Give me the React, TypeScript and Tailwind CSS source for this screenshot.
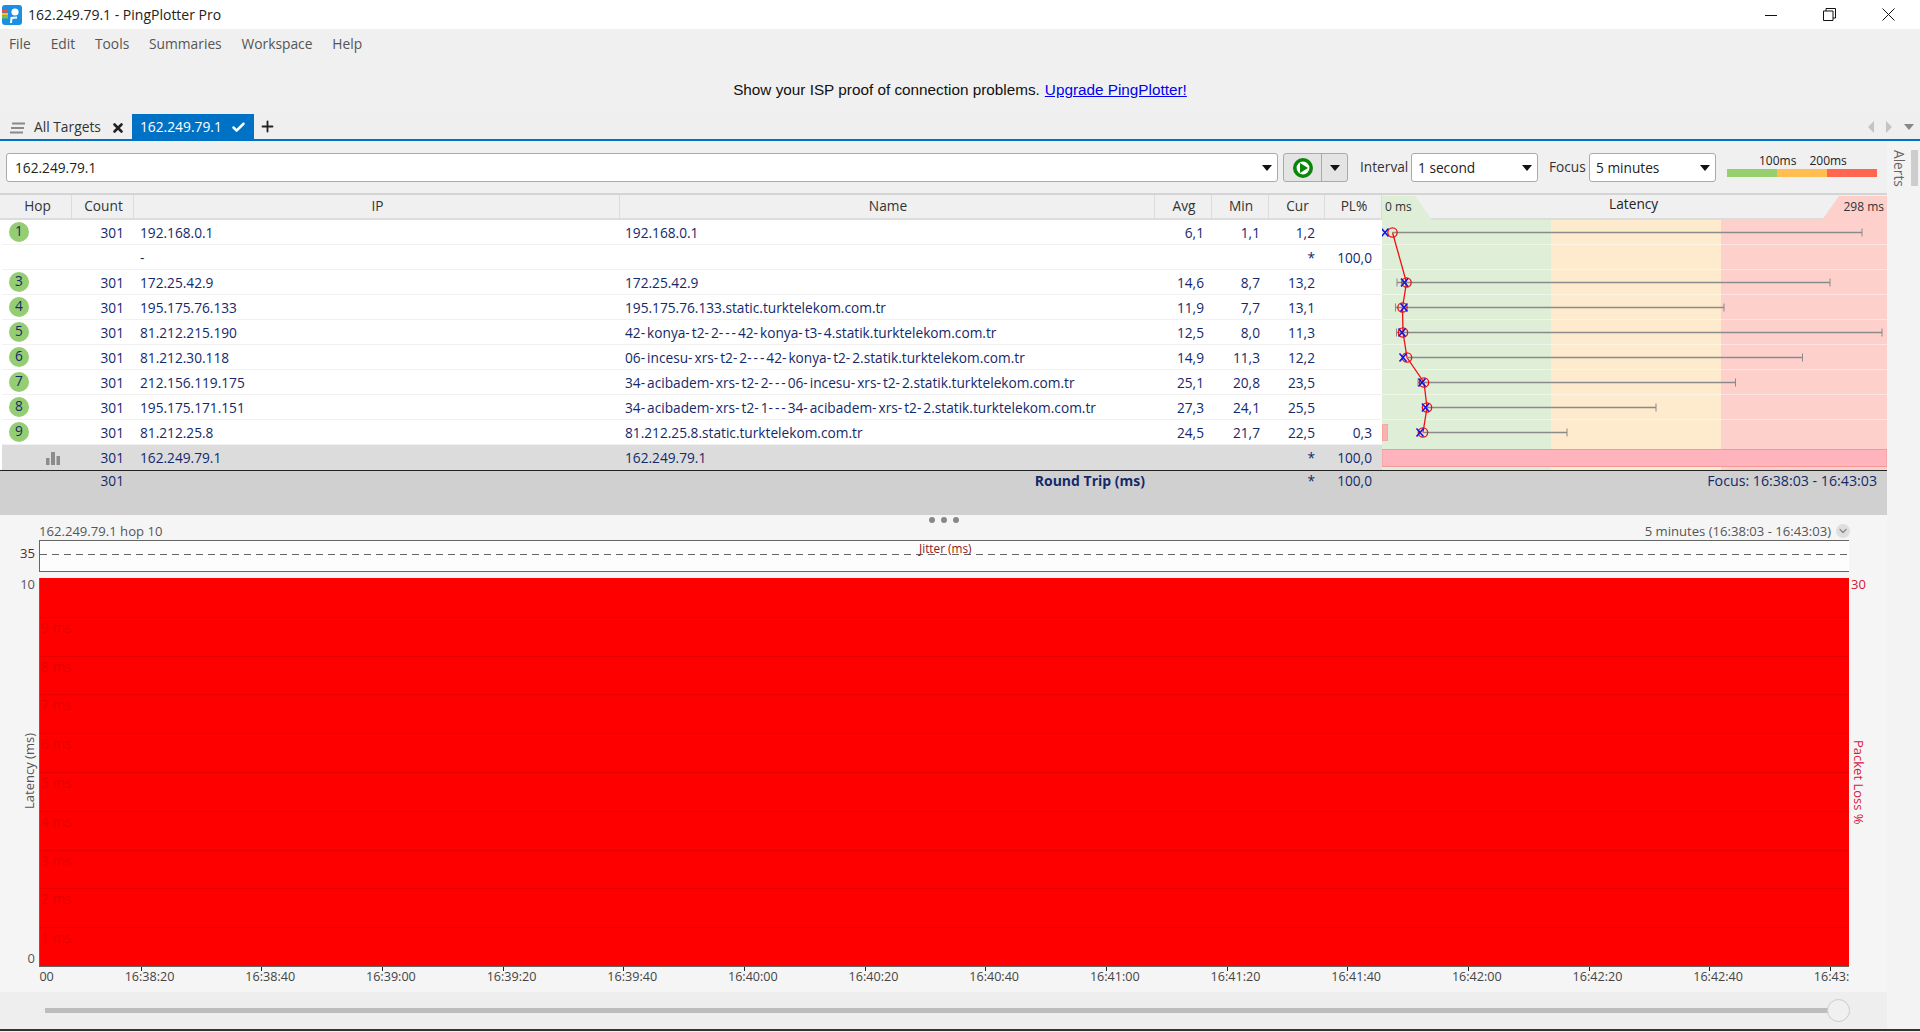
import { Check, ChevronDown, Plus, X } from 'lucide-react';

const COLS = 'grid grid-cols-[70px_62px_486px_535px_57px_57px_56px_57px]';

const hops = [
  { hop: '1', count: '301', ip: '192.168.0.1', name: '192.168.0.1', avg: '6,1', min: '1,1', cur: '1,2', pl: '' },
  { hop: '', count: '', ip: '-', name: '', avg: '', min: '', cur: '*', pl: '100,0' },
  { hop: '3', count: '301', ip: '172.25.42.9', name: '172.25.42.9', avg: '14,6', min: '8,7', cur: '13,2', pl: '' },
  { hop: '4', count: '301', ip: '195.175.76.133', name: '195.175.76.133.static.turktelekom.com.tr', avg: '11,9', min: '7,7', cur: '13,1', pl: '' },
  { hop: '5', count: '301', ip: '81.212.215.190', name: '42-konya-t2-2---42-konya-t3-4.statik.turktelekom.com.tr', avg: '12,5', min: '8,0', cur: '11,3', pl: '' },
  { hop: '6', count: '301', ip: '81.212.30.118', name: '06-incesu-xrs-t2-2---42-konya-t2-2.statik.turktelekom.com.tr', avg: '14,9', min: '11,3', cur: '12,2', pl: '' },
  { hop: '7', count: '301', ip: '212.156.119.175', name: '34-acibadem-xrs-t2-2---06-incesu-xrs-t2-2.statik.turktelekom.com.tr', avg: '25,1', min: '20,8', cur: '23,5', pl: '' },
  { hop: '8', count: '301', ip: '195.175.171.151', name: '34-acibadem-xrs-t2-1---34-acibadem-xrs-t2-2.statik.turktelekom.com.tr', avg: '27,3', min: '24,1', cur: '25,5', pl: '' },
  { hop: '9', count: '301', ip: '81.212.25.8', name: '81.212.25.8.static.turktelekom.com.tr', avg: '24,5', min: '21,7', cur: '22,5', pl: '0,3' },
];

// x values are relative to the left edge of the latency graph
const points = [
  { y: 12.5, c: 10.5, x: 3, left: null, right: 480 },
  { y: 62.5, c: 24.5, x: 22.5, left: 15, right: 448 },
  { y: 87.5, c: 20.5, x: 22, left: 13.5, right: 342 },
  { y: 112.5, c: 21, x: 20, left: 14.5, right: 500 },
  { y: 137.5, c: 25, x: 21, left: null, right: 420.5 },
  { y: 162.5, c: 42, x: 40, left: 36, right: 353.5 },
  { y: 187.5, c: 45, x: 43.5, left: null, right: 274 },
  { y: 212.5, c: 41, x: 38, left: null, right: 185 },
];

const times = [
  '16:38:00', '16:38:20', '16:38:40', '16:39:00', '16:39:20', '16:39:40', '16:40:00', '16:40:20', '16:40:40',
  '16:41:00', '16:41:20', '16:41:40', '16:42:00', '16:42:20', '16:42:40', '16:43:00',
];

function AppIcon() {
  return (
    <svg width="20" height="20" viewBox="0 0 20 20" className="ml-[2px] shrink-0">
      <rect width="20" height="20" rx="3" fill="#1b8fe2" />
      <rect x="0" y="5" width="6" height="2.5" fill="#e8503a" />
      <rect x="0" y="8" width="6" height="2.5" fill="#f5c033" />
      <rect x="0" y="11" width="6" height="2.5" fill="#7cc04b" />
      <circle cx="13" cy="7" r="3.6" fill="#fff" />
      <path d="M9 18 L9.5 13 L15 12.5" stroke="#fff" strokeWidth="2" fill="none" />
    </svg>
  );
}

function TitleBar() {
  return (
    <div className="flex h-[29px] items-center bg-white">
      <AppIcon />
      <span className="ml-[6px] text-[14px] text-[#222]">162.249.79.1 - PingPlotter Pro</span>
      <div className="ml-auto flex items-center">
        <svg width="12" height="12" viewBox="0 0 12 12" className="mr-[46px]">
          <path d="M0 6.5 H12" stroke="#111" strokeWidth="1" />
        </svg>
        <svg width="13" height="13" viewBox="0 0 13 13" className="mr-[46px]">
          <path d="M0.5 3 H10 V12.5 H0.5 Z M3 3 V0.5 H12.5 V10 H10" stroke="#111" strokeWidth="1" fill="none" />
        </svg>
        <svg width="13" height="13" viewBox="0 0 13 13" className="mr-[25px]">
          <path d="M0.5 0.5 L12.5 12.5 M12.5 0.5 L0.5 12.5" stroke="#111" strokeWidth="1" fill="none" />
        </svg>
      </div>
    </div>
  );
}

function MenuBar() {
  return (
    <div className="flex h-[29px] items-center gap-[19.8px] bg-[#f0f0f0] pl-[9px] pt-[1px] text-[13.8px] text-[#555]">
      <span>File</span>
      <span>Edit</span>
      <span>Tools</span>
      <span>Summaries</span>
      <span>Workspace</span>
      <span>Help</span>
    </div>
  );
}

function TabBar() {
  return (
    <div className="flex h-[28px] items-end border-b-2 border-[#0072c6] bg-[#efefef]">
      <div className="flex h-[26px] items-center pl-[10px] pt-[3px] text-[#333]">
        <svg width="15" height="12" viewBox="0 0 15 12">
          <path d="M2 1.5 H15 M1 6 H14 M0 10.5 H13" stroke="#8a8a8a" strokeWidth="2" />
        </svg>
        <span className="ml-[9px] text-[13.8px]">All Targets</span>
        <X size={14} strokeWidth={4.5} className="ml-[10px] text-[#222]" />
      </div>
      <div className="ml-[7px] flex h-[25px] w-[122px] items-center bg-[#0072c6] pl-[8px] pt-[2px] text-[13.8px] text-white">
        <span>162.249.79.1</span>
        <Check size={15} strokeWidth={4} className="ml-[9px]" />
      </div>
      <Plus size={17} strokeWidth={2.6} className="mb-[4px] ml-[5px] text-[#222]" />
      <div className="mb-[6px] ml-auto mr-[6px] flex items-center gap-[12px]">
        <span className="h-0 w-0 border-y-[6px] border-r-[6px] border-y-transparent border-r-[#c4c4c4]" />
        <span className="h-0 w-0 border-y-[6px] border-l-[6px] border-y-transparent border-l-[#c4c4c4]" />
        <span className="h-0 w-0 border-x-[5px] border-t-[6px] border-x-transparent border-t-[#888]" />
      </div>
    </div>
  );
}

function Caret() {
  return <span className="h-0 w-0 border-x-[5px] border-t-[6px] border-x-transparent border-t-[#111]" />;
}

function Select({ label }: { label: string }) {
  return (
    <div className="flex h-[29px] w-[127px] items-center justify-between rounded-[3px] border border-[#aaa] bg-white pl-[6px] pr-[5px] text-[13.7px] text-[#222]">
      <span className="mt-[2px]">{label}</span>
      <Caret />
    </div>
  );
}

function Toolbar() {
  return (
    <div className="flex h-[52px] items-start bg-[#f0f0f0] pl-[6px] pt-[12px]">
      <div className="flex h-[29px] w-[1272px] items-center justify-between rounded-[3px] border border-[#aaa] bg-white pl-[8px] pr-[5px] text-[13.7px] text-[#222]">
        <span className="mt-[1px]">162.249.79.1</span>
        <Caret />
      </div>
      <div className="ml-[5px] flex h-[29px] w-[65px] rounded-[3px] border border-[#aaa] bg-[#e4e4e4]">
        <div className="flex w-[38px] items-center justify-center border-r border-[#aaa]">
          <svg width="20" height="20" viewBox="0 0 20 20">
            <circle cx="10" cy="10" r="8.2" fill="#fff" stroke="#0a860a" strokeWidth="3.6" />
            <path d="M7 5 L15 10 L7 15 Z" fill="#0a860a" />
          </svg>
        </div>
        <div className="flex flex-1 items-center justify-center">
          <Caret />
        </div>
      </div>
      <span className="ml-[12px] mt-[4px] w-[51px] text-[13.7px] text-[#333]">Interval</span>
      <Select label="1 second" />
      <span className="ml-[11px] mt-[4px] w-[40px] text-[13.7px] text-[#333]">Focus</span>
      <Select label="5 minutes" />
      <div className="ml-[11px] w-[150px]">
        <div className="flex h-[16px] items-center pl-[32px] text-[12px] leading-none text-[#222]">
          <span>100ms</span>
          <span className="ml-[13px]">200ms</span>
        </div>
        <div className="flex h-[8px]">
          <span className="w-[50px] bg-[#97ce6e]" />
          <span className="w-[50px] bg-[#ffbe4f]" />
          <span className="w-[50px] bg-[#ff6650]" />
        </div>
      </div>
    </div>
  );
}

function TableHeader() {
  const cell = 'flex items-center justify-center border-r border-[#dcdcdc] pl-[2px]';
  return (
    <div className="flex h-[27px] border-y-[2px] border-t-[#d4d4d4] border-b-[#dcdcdc] bg-[#f0f0f0] pl-[2px] text-[13.7px] text-[#333]">
      <div className={COLS}>
        <div className={cell}>Hop</div>
        <div className={cell}>Count</div>
        <div className={cell}>IP</div>
        <div className={cell}>Name</div>
        <div className={cell}>Avg</div>
        <div className={cell}>Min</div>
        <div className={cell}>Cur</div>
        <div className={cell}>PL%</div>
      </div>
      <div className="relative flex w-[505px] justify-between">
        <svg width="505" height="24" viewBox="0 0 505 24" className="absolute left-0 top-[1px]">
          <path d="M0 0 H33 L50 24 H0 Z" fill="#dfeed7" />
          <path d="M457 0 H505 V24 H440 Z" fill="#fed0cc" />
        </svg>
        <span className="relative ml-[3px] mt-[3px] text-[12px] text-[#333]">0 ms</span>
        <span className="relative -mt-[1px] ml-[12px] text-[#222]">Latency</span>
        <span className="relative mr-[3px] mt-[3px] text-[12px] text-[#333]">298 ms</span>
      </div>
    </div>
  );
}

// the hyphens in the host names run wider in the original UI font
function HostName({ name }: { name: string }) {
  const parts = name.split('-');
  return (
    <>
      {parts.map((part, i) => (
        <span key={i}>
          {i > 0 && <span className="tracking-[2px]">-</span>}
          {part}
        </span>
      ))}
    </>
  );
}

function HopRow({ row }: { row: (typeof hops)[number] }) {
  return (
    <div className={`${COLS} h-[25px] border-b border-[#f1f1f1] text-[13.7px] text-[#14296b]`}>
      <div className="pl-[7px] pt-[2px]">
        {row.hop && (
          <span className="flex h-[20px] w-[20px] items-start justify-center rounded-full bg-[#95cd72] text-[13.7px] leading-[18px]">
            {row.hop}
          </span>
        )}
      </div>
      <div className="pr-[10px] text-right leading-[26px]">{row.count}</div>
      <div className="pl-[6px] leading-[26px]">{row.ip}</div>
      <div className="pl-[5px] leading-[26px]">
        <HostName name={row.name} />
      </div>
      <div className="pr-[8px] text-right leading-[26px]">{row.avg}</div>
      <div className="pr-[9px] text-right leading-[26px]">{row.min}</div>
      <div className="pr-[10px] text-right leading-[26px]">{row.cur}</div>
      <div className="pr-[10px] text-right leading-[26px]">{row.pl}</div>
    </div>
  );
}

function LatencyGraph() {
  return (
    <svg width="505" height="250" viewBox="0 0 505 250" className="shrink-0">
      <rect x="0" y="0" width="169" height="250" fill="#dfeed7" />
      <rect x="169" y="0" width="170" height="250" fill="#feeacd" />
      <rect x="339" y="0" width="166" height="250" fill="#fed0cc" />
      {[25, 50, 75, 100, 125, 150, 175, 200].map((y) => (
        <line key={y} x1="0" x2="505" y1={y - 0.5} y2={y - 0.5} stroke="#fff" strokeOpacity="0.45" />
      ))}
      <rect x="0.5" y="204.5" width="5" height="16" fill="#f9b3b3" stroke="#f4a9a0" />
      <rect x="0" y="229.5" width="505" height="17" fill="#ffb3bd" stroke="#ef9a98" />
      <polyline points={points.map((p) => `${p.c},${p.y}`).join(' ')} fill="none" stroke="#f01010" strokeWidth="1.3" />
      {points.map((p) => (
        <g key={p.y}>
          <line x1={p.left ?? p.c} x2={p.right} y1={p.y} y2={p.y} stroke="#8a8a8a" strokeWidth="1.3" />
          {p.left !== null && <line x1={p.left} x2={p.left} y1={p.y - 4} y2={p.y + 4} stroke="#8a8a8a" />}
          <line x1={p.right} x2={p.right} y1={p.y - 4} y2={p.y + 4} stroke="#8a8a8a" />
          <circle cx={p.c} cy={p.y} r="4.7" fill="none" stroke="#f01010" strokeWidth="1.3" />
          <path
            d={`M${p.x - 3.5} ${p.y - 4} L${p.x + 3.5} ${p.y + 4} M${p.x + 3.5} ${p.y - 4} L${p.x - 3.5} ${p.y + 4}`}
            stroke="#1515e8"
            strokeWidth="1.6"
          />
        </g>
      ))}
    </svg>
  );
}

function TableBody() {
  return (
    <div className="flex bg-white pl-[2px]">
      <div className="w-[1380px]">
        {hops.map((row) => (
          <HopRow key={row.ip} row={row} />
        ))}
        <div className={`${COLS} h-[25px] bg-[#dcdcdc] text-[13.7px] leading-[26px] text-[#14296b]`}>
          <div className="flex items-center justify-end pr-[12px]">
            <svg width="14" height="13" viewBox="0 0 14 13">
              <path d="M0 6 H3.5 V13 H0 Z M5 0 H9 V13 H5 Z M10.5 4 H14 V13 H10.5 Z" fill="#8c8c8c" />
            </svg>
          </div>
          <div className="pr-[10px] text-right">301</div>
          <div className="pl-[6px]">162.249.79.1</div>
          <div className="pl-[5px]">162.249.79.1</div>
          <div />
          <div />
          <div className="pr-[10px] text-right">*</div>
          <div className="pr-[10px] text-right">100,0</div>
        </div>
      </div>
      <LatencyGraph />
    </div>
  );
}

function SummaryRow() {
  return (
    <div className="flex h-[45px] border-t-[1.5px] border-[#222] bg-[#d0d0d0] pl-[2px] text-[13.7px] leading-[20px] text-[#14296b]">
      <div className={COLS}>
        <div />
        <div className="pr-[10px] text-right">301</div>
        <div />
        <div className="pr-[10px] text-right text-[14px] font-bold">Round Trip (ms)</div>
        <div />
        <div />
        <div className="pr-[10px] text-right">*</div>
        <div className="pr-[10px] text-right">100,0</div>
      </div>
      <div className="w-[505px] pr-[10px] text-right text-[14.2px]">Focus: 16:38:03 - 16:43:03</div>
    </div>
  );
}

function JitterStrip() {
  return (
    <div className="flex h-[32px]">
      <div className="w-[39px] pr-[4px] pt-[3px] text-right text-[13.2px] leading-[20px] text-[#5c2a2a]">35</div>
      <div className="relative w-[1810px] border-y-[1.5px] border-l-[1.5px] border-[#666] bg-[#fdfdfd]">
        <div className="mt-[12.5px] h-px bg-[repeating-linear-gradient(90deg,#666_0_7px,transparent_7px_12px)]" />
        <span className="absolute left-[878px] top-0 px-[1px] text-[11.8px] leading-[15px] text-[#8b1a1a]">
          Jitter (ms)
        </span>
      </div>
    </div>
  );
}

function RedChart() {
  const labels = ['', '9 ms', '8 ms', '7 ms', '6 ms', '5 ms', '4 ms', '3 ms', '2 ms', '1 ms'];
  return (
    <div className="flex h-[389px]">
      <div className="flex w-[39px] flex-col items-end justify-between pr-[4px] text-[13px] text-[#555]">
        <span className="leading-[12px]">10</span>
        <span className="mr-[-1px] mt-[2px] rotate-180 leading-[14px] [writing-mode:vertical-rl]">Latency (ms)</span>
        <span className="leading-[18px]">0</span>
      </div>
      <div className="grid w-[1810px] grid-rows-10 border-b border-l border-[#666] bg-[#ff0000]">
        {labels.map((label, i) => (
          <div key={label} className={`pl-[1px] text-[13.7px] leading-[20px] text-[#e60000] ${i ? 'border-t border-[#e60000]' : ''}`}>
            {label}
          </div>
        ))}
      </div>
      <div className="flex w-[38px] flex-col pl-[2px] text-[13px] text-[#d9143c]">
        <span className="leading-[12px]">30</span>
        <span className="ml-[1px] mt-[150px] self-start leading-[14px] [writing-mode:vertical-rl]">Packet Loss %</span>
      </div>
    </div>
  );
}

function TimeAxis() {
  return (
    <div className="ml-[39px] h-[25px] w-[1810px] overflow-hidden">
      <div className="-ml-[35px] flex w-[2000px]">
        {times.map((t) => (
          <div key={t} className="w-[120.66px] shrink-0">
            <div className="ml-[16px] h-[4px] w-px bg-[#222]" />
            <div className="-mt-[1px] text-[12.6px] leading-[14px] text-[#444]">{t}</div>
          </div>
        ))}
      </div>
    </div>
  );
}

function Slider() {
  return (
    <div className="flex h-[37px] items-center bg-[#eeeeee] pl-[45px]">
      <div className="relative h-[5px] w-[1785px] bg-[#bdbdbd]">
        <span className="absolute -top-[9px] left-[1782px] h-[23px] w-[23px] rounded-full border border-[#ccc] bg-[#f0f0f0]" />
      </div>
    </div>
  );
}

function GraphPanel() {
  return (
    <div className="relative bg-[#f5f5f5]">
      <div className="absolute left-[929px] top-[2px] flex gap-[6px]">
        <span className="h-[6px] w-[6px] rounded-full bg-[#888]" />
        <span className="h-[6px] w-[6px] rounded-full bg-[#888]" />
        <span className="h-[6px] w-[6px] rounded-full bg-[#888]" />
      </div>
      <div className="flex h-[25px] items-end justify-between pl-[39px] pr-[38px] text-[13.1px] leading-[18px] text-[#555]">
        <span>162.249.79.1 hop 10</span>
        <div className="-mr-[1px] flex items-center">
          <span>5 minutes (16:38:03 - 16:43:03)</span>
          <span className="ml-[5px] flex h-[14px] w-[14px] items-center justify-center rounded-full bg-[#dedede]">
            <ChevronDown size={12} strokeWidth={2.5} className="text-[#888]" />
          </span>
        </div>
      </div>
      <JitterStrip />
      <div className="h-[6px]" />
      <RedChart />
      <TimeAxis />
      <Slider />
    </div>
  );
}

function AlertsRail() {
  return (
    <div className="flex w-[33px] shrink-0 bg-[#f3f3f3] pt-[9px]">
      <span className="ml-[3px] h-[40px] text-[13.7px] leading-[18px] text-[#666] [writing-mode:vertical-rl]">Alerts</span>
      <span className="ml-[3px] h-[36px] w-[7px] bg-[#cdcdcd]" />
    </div>
  );
}

export default function App() {
  return (
    <div className="flex h-[1032px] w-[1920px] flex-col overflow-hidden bg-[#f0f0f0] font-['Open_Sans',sans-serif]">
      <TitleBar />
      <MenuBar />
      <div className="flex h-[55px] items-center justify-center pt-[9px] font-['Liberation_Sans',sans-serif] text-[15.3px] text-[#111]">
        <span>Show your ISP proof of connection problems.</span>
        <span className="ml-[5px] text-[#0000ee] underline">Upgrade PingPlotter!</span>
      </div>
      <TabBar />
      <div className="flex">
        <div className="w-[1887px] shrink-0">
          <Toolbar />
          <TableHeader />
          <TableBody />
          <SummaryRow />
          <GraphPanel />
        </div>
        <AlertsRail />
      </div>
      <div className="h-[2px] bg-[#333]" />
    </div>
  );
}
